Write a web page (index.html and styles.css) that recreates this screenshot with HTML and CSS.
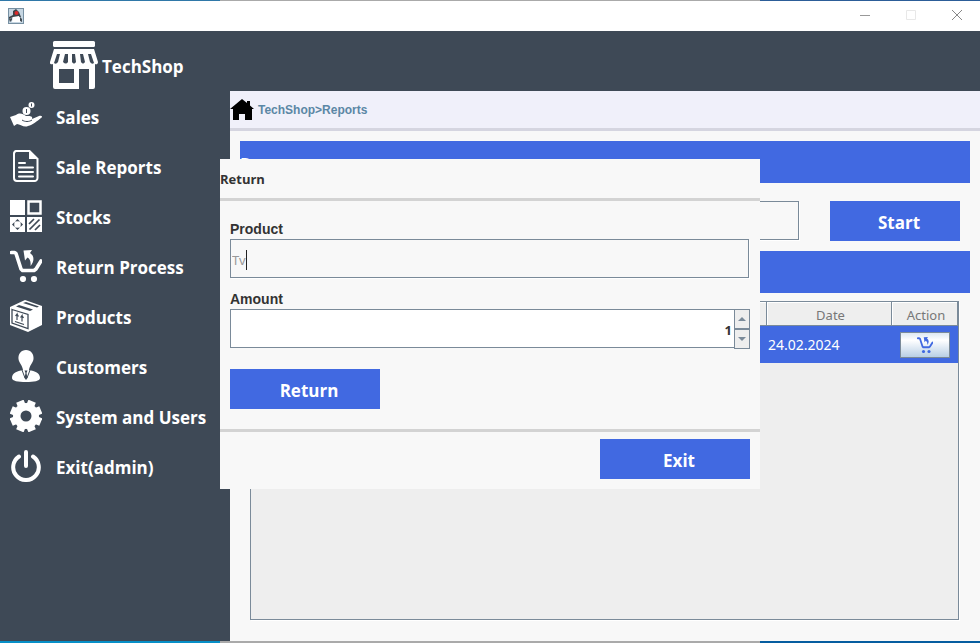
FILE: index.html
```html
<!DOCTYPE html>
<html lang="en">
<head>
<meta charset="utf-8">
<title>TechShop</title>
<link rel="stylesheet" href="styles.css">
</head>
<body>
<svg class="defs" aria-hidden="true">
  <symbol id="cart" viewBox="0 0 32 32">
    <path d="M1.5 2.500h3l1.500 1 5 15.500 1.500 1.500h11.500l2-1.500 5-8" fill="none" stroke="currentColor" stroke-width="3.600" stroke-linecap="round" stroke-linejoin="round"/>
    <circle cx="13" cy="29" r="3.100" fill="currentColor"/>
    <circle cx="24" cy="29" r="3.100" fill="currentColor"/>
    <path d="M13.500 .5L22 0l-2 3c4.500 3 4.500 8 .500 13 .500-4.500-.500-7-3-8.500l-2.500 3z" fill="currentColor"/>
  </symbol>
</svg>
<div class="window">
  <header class="titlebar">
    <svg class="app-icon" viewBox="0 0 16 16" aria-hidden="true">
      <rect x=".5" y=".5" width="15" height="15" fill="#c6d6e2" stroke="#7790a2"/>
      <path d="M5 3l3-2 3 3 2 5-3 0-5 0-4 2 0-2 4-2z" fill="#3c444a"/>
      <path d="M5 9l6-1 2 6-9 0z" fill="#fff"/>
      <path d="M1 11l3-1 0 2-2 2zM12 9l2 2 0 3-2-1z" fill="#444d54"/>
      <circle cx="8.500" cy="5" r="2" fill="#dc2b2b"/>
    </svg>
    <div class="window-controls">
      <button type="button" aria-label="Minimize"><svg viewBox="0 0 10 10"><path d="M0 5.500h10" stroke="#999"/></svg></button>
      <button type="button" aria-label="Maximize" disabled><svg viewBox="0 0 10 10"><path d="M.5.5h9v9h-9z" fill="none" stroke="#e8e8e8"/></svg></button>
      <button type="button" aria-label="Close"><svg viewBox="0 0 10 10"><path d="M0 0l10 10M10 0L0 10" stroke="#888"/></svg></button>
    </div>
  </header>
  <div class="body">
    <nav class="sidebar">
      <div class="brand">
        <svg viewBox="0 0 48 48" aria-hidden="true">
          <g fill="#fff">
            <rect x="3" y="0" width="42" height="6" rx="1.500"/>
            <path d="M4 8h40l4 13c0 2.500-2 2.500-3 2v23a2 2 0 0 1-2 2H5a2 2 0 0 1-2-2V23c-2 1-3.500-.500-3-2z"/>
          </g>
          <g fill="#3e4956">
            <path d="M9 28h15v14H9zM29 28h10v20H29z"/>
            <path d="M7 13h3l-2 8q-2 3-4 1zM15 13h3v8q-2 3-5 0zM22 13h3l1 8q-2 3-4 0zM30 13h3l2 8q-2 3-4 0zM38 13h3l3 9q-2 2-4-1z"/>
          </g>
        </svg>
        <span>TechShop</span>
      </div>
      <a class="item" href="#"><svg viewBox="0 0 32 32" aria-hidden="true"><g fill="#fff"><path d="M0 17l6-2c4-3 7-1 10 1 4 0 7 0 6 3l7-3c3-1 4 1 2 2-4 3-8 7-13 8-4 2-8-2-11-2l-3 2z"/><circle cx="16.500" cy="11" r="4"/><circle cx="21.500" cy="5" r="3"/></g><path d="M12 20c3 2 7 2 10 0" fill="none" stroke="#3e4956"/><path d="M16.500 9v4M21.500 3.500v3" stroke="#3e4956"/></svg><span>Sales</span></a>
      <a class="item" href="#"><svg viewBox="0 0 32 32" aria-hidden="true"><path d="M6 1h13.500l8 8v19a3 3 0 0 1-3 3H7a3 3 0 0 1-3-3V4a3 3 0 0 1 2-3z" fill="none" stroke="#fff" stroke-width="2"/><path d="M19 0v9h9.500z" fill="#fff"/><path d="M9 13h6M9 17.500h14M9 22h14M9 26.500h14" stroke="#fff" stroke-width="2" stroke-linecap="round"/></svg><span>Sale Reports</span></a>
      <a class="item" href="#"><svg viewBox="0 0 32 32" aria-hidden="true"><path d="M0 0h15v15H0zM0 17h15v15H0zM17 17h15v15H17z" fill="#fff"/><path d="M18.500 1.500h12v12h-12z" fill="none" stroke="#fff" stroke-width="2.500"/><path d="M5 21.500l2.500-2.500 2.500 2.500zM5 27.500l2.500 2.500 2.500-2.500zM4.500 22l-2.500 2.500 2.500 2.500zM10.500 22l2.500 2.500-2.500 2.500z" fill="#3e4956"/><circle cx="7.500" cy="24.500" r="3" fill="#fff"/><path d="M19 24l5-5M19.500 29.500l10-10M25 30l5-5" stroke="#3e4956" stroke-width="1.700"/></svg><span>Stocks</span></a>
      <a class="item" href="#"><svg aria-hidden="true"><use href="#cart"/></svg><span>Return Process</span></a>
      <a class="item" href="#"><svg viewBox="0 0 32 32" aria-hidden="true"><path d="M0 7l15-7 17 6v19l-14 7L0 25z" fill="#fff"/><path d="M2 9.500l16 5v14L2 23z" fill="#fff" stroke="#3e4956" stroke-width="1.300"/><path d="M6 6.500l14 4.500 3-1.500-14-4.500zM13 3l14 4.500 2-1-13-4.500z" fill="#3e4956"/><path d="M7 20v-6l-1.500 2M7 14l1.500 2.500M12 21.500v-6l-1.500 2M12 15.500l1.500 2.500M5 21.500l9 3" fill="none" stroke="#3e4956" stroke-width="1.200"/></svg><span>Products</span></a>
      <a class="item" href="#"><svg viewBox="0 0 32 32" aria-hidden="true"><path d="M16 0c5 0 8 4 7.500 9-.5 4-4 6.500-4.500 11 6 1 11 3 11 8 0 3-6 4-14 4S2 31 2 28c0-5 5-7 11-8-.5-4.500-4-7-4.500-11C8 4 11 0 16 0z" fill="#fff"/><path d="M12 20l3 8M20 20l-3 8" stroke="#3e4956"/><path d="M14.500 20.500h3L16.500 23l1 5-1.500 2-1.500-2 1-5z" fill="#3e4956"/></svg><span>Customers</span></a>
      <a class="item" href="#"><svg viewBox="0 0 32 32" aria-hidden="true"><circle cx="16" cy="16" r="13" fill="#fff"/><g stroke="#fff" stroke-width="8"><path d="M16 0v32" transform="rotate(22.500 16 16)"/><path d="M16 0v32" transform="rotate(67.500 16 16)"/><path d="M16 0v32" transform="rotate(112.500 16 16)"/><path d="M16 0v32" transform="rotate(157.500 16 16)"/></g><circle cx="16" cy="16" r="5.500" fill="#3e4956"/></svg><span>System and Users</span></a>
      <a class="item" href="#"><svg viewBox="0 0 32 32" aria-hidden="true"><path d="M9 6.500a12.800 12.800 0 1 0 14 0M16 2v14" fill="none" stroke="#fff" stroke-width="4" stroke-linecap="round"/></svg><span>Exit(admin)</span></a>
    </nav>
    <main class="main">
      <div class="crumbs">
        <svg viewBox="0 0 24 22" aria-hidden="true"><path d="M12 0l5 4V2h3v4.500l4 3.500h-2v11h-7v-6H9v6H3V10H0z"/></svg>
        <span>TechShop&gt;Reports</span>
      </div>
      <div class="content">
        <h1 class="band">Reports</h1>
        <form class="filter">
          <input class="field" type="text" aria-label="Filter">
          <button class="primary" type="button">Start</button>
        </form>
        <div class="band"></div>
        <div class="table-pane">
          <table>
            <thead><tr><th></th><th class="date">Date</th><th class="action">Action</th></tr></thead>
            <tbody><tr><td></td><td>24.02.2024</td><td class="cell-action"><button type="button" aria-label="Return item"><svg aria-hidden="true"><use href="#cart"/></svg></button></td></tr></tbody>
          </table>
        </div>
      </div>
    </main>
  </div>
  <section class="dialog" role="dialog" aria-labelledby="dialog-title">
    <h2 id="dialog-title">Return</h2>
    <form class="dialog-form">
      <label for="product">Product</label>
      <div class="field product"><input id="product" type="text" value="Tv" size="1"><i class="caret"></i></div>
      <label for="amount">Amount</label>
      <div class="spinner">
        <input id="amount" type="text" inputmode="numeric" value="1">
        <div class="steps">
          <button type="button" aria-label="Increase"><svg viewBox="0 0 8 4"><path d="M0 4l4-4 4 4z" fill="#7a8a99"/></svg></button>
          <button type="button" aria-label="Decrease"><svg viewBox="0 0 8 4"><path d="M0 0l4 4 4-4z" fill="#7a8a99"/></svg></button>
        </div>
      </div>
      <button class="primary" type="button">Return</button>
    </form>
    <footer><button class="primary" type="button">Exit</button></footer>
  </section>
</div>
</body>
</html>
```
FILE: styles.css
```css
* { box-sizing: border-box; }
body { margin: 0; font-family: "Noto Sans", "Open Sans", sans-serif; }
button, input { font: inherit; border: 0; padding: 0; border-radius: 0; }
svg { display: block; }
.defs { position: absolute; width: 0; height: 0; }

.window { position: relative; display: flex; flex-direction: column; min-height: 100vh; background: #3e4956; }
.window::before, .window::after { content: ""; flex: none; height: 1px; background: linear-gradient(90deg, #2f78a8 220px, #aaa 220px 760px, #2c5d98 760px); }
.window::after { height: 2px; background: linear-gradient(90deg, #078fc7 220px, #aaa 220px 760px, #065da0 760px); }

.titlebar { display: flex; align-items: center; justify-content: space-between; height: 30px; padding-left: 8px; background: #fff; }
.app-icon { width: 16px; height: 16px; }
.window-controls { display: flex; height: 100%; }
.window-controls button { display: grid; place-items: center; width: 46px; padding-bottom: 2px; background: none; }
.window-controls svg { width: 10px; height: 10px; }

.body { flex: 1; display: flex; }
.sidebar { flex: none; width: 230px; padding-top: 10px; color: #fff; font: 700 17px/24px "Open Sans", "Noto Sans", sans-serif; }
.brand { display: flex; align-items: center; gap: 4px; height: 50px; padding: 0 0 2px 50px; }
.brand svg { width: 48px; height: 48px; }
.brand span, .item span { padding-top: 4px; }
.item { display: flex; align-items: center; gap: 14px; height: 50px; padding-left: 10px; color: #fff; text-decoration: none; }
.item svg { flex: none; width: 32px; height: 32px; }

.main { flex: 1; display: flex; flex-direction: column; margin-top: 60px; background: #f8f8f8; }
.crumbs { display: flex; align-items: center; gap: 4px; height: 40px; background: #f0f0fa; border-bottom: 3px solid #d5d5e0; color: #5b87a5; font: bold 12px "Liberation Sans", sans-serif; }
.crumbs svg { width: 24px; height: 22px; }
.content { flex: 1; display: flex; flex-direction: column; padding: 10px 10px 21px; }
.band { flex: none; height: 42px; margin: 0; overflow: hidden; color: #fff; background: #4169e1; font: 700 17px/48px "Open Sans", "Noto Sans", sans-serif; }
.filter { display: flex; gap: 31px; padding: 18px 10px 10px; }
.field { flex: 1; min-width: 0; height: 39px; border: 1px solid #7a8a99; background: #f8f8f8; box-shadow: 1px 1px #fff; }
.primary { width: 150px; height: 40px; padding: 4px 0 0 8px; color: #fff; background: #4169e1; font: 700 17px/24px "Open Sans", "Noto Sans", sans-serif; }
.filter .primary { width: 130px; }
.table-pane { flex: 1; margin: 8px 11px 0 10px; border: 1px solid #7a8a99; background: #eee; box-shadow: 1px 1px #fff; }
table { width: 100%; table-layout: fixed; border-collapse: separate; border-spacing: 0; font: 14px/20px "Noto Sans", sans-serif; }
th { height: 24px; padding: 2px 0 0 3px; border-right: 1px solid #7a8a99; border-bottom: 1px solid #7a8a99; box-shadow: inset 1px 1px #fff; color: #777; font-size: 13px; font-weight: 400; }
.date { width: 125px; }
.action { width: 66px; }
td { height: 37px; padding: 0 1px; background: #4169e1; color: #fff; }
.cell-action button { display: grid; place-items: center; width: 50px; height: 26px; margin-left: 7px; border: 1px solid #7a8a99; color: #4169e1; background: linear-gradient(#dde8f3, #fff 30%, #b8cfe5); }
.cell-action svg { width: 16px; height: 16px; }

.dialog { position: absolute; left: 50%; top: 159px; width: 540px; margin-left: -270px; background: #f8f8f8; color: #333; }
.dialog h2 { height: 42px; margin: 0; border-bottom: 3px solid #d3d3d3; font: 700 13px/40px "Open Sans", "Noto Sans", sans-serif; }
.dialog-form { display: flex; flex-direction: column; align-items: flex-start; padding: 18px 10px 20px; }
.dialog label { height: 20px; font: bold 14px/20px "Liberation Sans", sans-serif; }
.product { flex: none; display: flex; align-items: center; width: calc(100% - 1px); padding: 2px 1px 0; margin-bottom: 11px; }
.product input { width: 14px; height: 24px; background: none; color: #999; font-size: 13px; outline: 0; }
.caret { width: 1px; height: 20px; background: #222; }
.spinner { display: flex; width: 100%; height: 40px; margin-bottom: 20px; }
.spinner input { flex: 1; min-width: 0; height: 39px; padding: 3px 2px 0; border: 1px solid #7a8a99; border-right: 0; background: #fff; color: #333; font: 700 13px "Open Sans", "Noto Sans", sans-serif; text-align: right; }
.steps { display: flex; flex-direction: column; width: 16px; }
.steps button { flex: 1; display: grid; place-items: center; border: 1px solid #7a8a99; background: #eee; }
.steps svg { width: 8px; height: 4px; }
.dialog footer { display: flex; justify-content: flex-end; padding: 7px 10px 10px; border-top: 3px solid #d3d3d3; }
```
